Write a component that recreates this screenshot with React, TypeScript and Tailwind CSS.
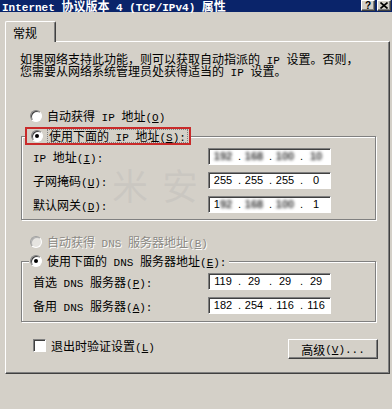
import React from "react";

const MONO = "font-['Liberation_Mono',monospace] text-[11px] leading-[0]";

function T({ s }: { s: string }) {
  const out: React.ReactNode[] = [];
  const re = /&(.)|([\x20-\x25\x27-\x7e]+)|([^\x20-\x7e]+)/g;
  let m: RegExpExecArray | null;
  let i = 0;
  while ((m = re.exec(s))) {
    if (m[1])
      out.push(
        <span key={i++} className={MONO + " underline underline-offset-[1px]"}>
          {m[1]}
        </span>
      );
    else if (m[2])
      out.push(
        <span key={i++} className={MONO + " whitespace-pre"}>
          {m[2]}
        </span>
      );
    else out.push(<span key={i++}>{m[3]}</span>);
  }
  return <>{out}</>;
}

function Radio({ on, disabled }: { on?: boolean; disabled?: boolean }) {
  return (
    <div
      className={`w-[12px] h-[12px] rounded-full shrink-0 flex items-center justify-center border ${
        disabled
          ? "border-t-[#a0a0a0] border-l-[#a0a0a0] border-b-white border-r-white shadow-[inset_1px_1px_0_#b0b0b0] bg-[#e6e4e0]"
          : "border-t-[#808080] border-l-[#808080] border-b-white border-r-white shadow-[inset_1px_1px_0_#404040] bg-white"
      }`}
    >
      {on && <div className="w-[4px] h-[4px] rounded-full bg-black" />}
    </div>
  );
}

function Seg({ children }: { children?: React.ReactNode }) {
  return <div className="w-[26px] flex justify-center whitespace-pre">{children}</div>;
}
function Dot() {
  return <div className="w-[5px] flex justify-end">.</div>;
}

function IPField({ segs }: { segs: React.ReactNode[] }) {
  return (
    <div className="w-[123px] h-[17px] bg-white border border-t-[#808080] border-l-[#808080] border-b-white border-r-white shadow-[inset_1px_1px_0_#404040] flex items-center pl-[1px] font-['Liberation_Sans',sans-serif] text-[11px] leading-[13px] text-black">
      <Seg>{segs[0]}</Seg>
      <Dot />
      <Seg>{segs[1]}</Seg>
      <Dot />
      <Seg>{segs[2]}</Seg>
      <Dot />
      <Seg>{segs[3]}</Seg>
    </div>
  );
}

function Blur({ t }: { t: string }) {
  return <span className="blur-[1.4px] text-[#3a3a3a] font-bold">{t}</span>;
}

function Row({ label, segs }: { label: string; segs: React.ReactNode[] }) {
  return (
    <div className="flex items-center h-[17px]">
      <div className="w-[175px] leading-[14px]">
        <T s={label} />
      </div>
      <IPField segs={segs} />
    </div>
  );
}

function TitleBtn({ children }: { children: React.ReactNode }) {
  return (
    <div className="w-[14px] h-[11px] bg-[#d4d0c8] border border-t-white border-l-white border-b-[#404040] border-r-[#404040] shadow-[inset_-1px_-1px_0_#808080] flex items-center justify-center text-black">
      {children}
    </div>
  );
}

export default function App() {
  return (
    <div className="w-[392px] h-[409px] bg-[#d4d0c8] overflow-hidden relative text-[12px] leading-[14px] text-black font-['Noto_Sans_CJK_SC','Noto_Sans_CJK_JP',sans-serif]">
      {/* title bar */}
      <div className="h-[12px] bg-[#0a246a] flex items-start justify-between">
        <div className="pl-[2px] text-white font-bold leading-[12px] text-[12px] whitespace-nowrap">
          <T s="Internet 协议版本 4 (TCP/IPv4) 属性" />
        </div>
        <div className="flex gap-[2px] pr-[1px]">
          <TitleBtn>
            <span className="font-['Liberation_Sans',sans-serif] font-bold text-[10px] leading-[9px]">?</span>
          </TitleBtn>
          <TitleBtn>
            <svg width="8" height="7" viewBox="0 0 8 7">
              <path d="M0.5 0.5 L7.5 6.5 M7.5 0.5 L0.5 6.5" stroke="#000" strokeWidth="1.6" />
            </svg>
          </TitleBtn>
        </div>
      </div>

      {/* tab */}
      <div className="mt-[9px] ml-[5px] w-[51px] h-[21px] -mb-[1px] relative z-10 bg-[#d4d0c8] border-t border-l border-r border-t-white border-l-white border-r-[#404040] rounded-t-[2px] shadow-[inset_-1px_0_0_#808080] pl-[7px] pt-[4px]">
        常规
      </div>

      {/* panel */}
      <div className="ml-[5px] w-[385px] h-[333px] border border-t-white border-l-white border-r-[#404040] border-b-[#404040] shadow-[inset_-1px_-1px_0_#808080] flex flex-col">
        <div className="ml-[14px] mt-[11px] leading-[12px] whitespace-nowrap">
          <T s="如果网络支持此功能，则可以获取自动指派的 IP 设置。否则，" />
          <br />
          <T s="您需要从网络系统管理员处获得适当的 IP 设置。" />
        </div>

        <div className="mt-[31px] ml-[24px] h-[16px] flex items-center gap-[5px]">
          <Radio />
          <span>
            <T s="自动获得 IP 地址(&O)" />
          </span>
        </div>

        <fieldset className="mt-[3px] ml-[15px] w-[355px] border border-[#808080] shadow-[1px_1px_0_#fff,inset_1px_1px_0_#fff] pt-[3px] pb-[6px]">
          <legend className="ml-[3px] bg-[#d4d0c8]">
            <div className="h-[18px] border-2 border-[#c92a2a] flex items-center pl-[4px] pr-[1px] gap-[4px]">
              <Radio on />
              <span className="border border-dotted border-[#808080] px-[1px] leading-[12px] whitespace-nowrap">
                <T s="使用下面的 IP 地址(&S):" />
              </span>
            </div>
          </legend>
          <div className="flex flex-col gap-[7px] pl-[11px]">
            <Row
              label="IP 地址(&I):"
              segs={[<Blur key="a" t="192" />, <Blur key="b" t="168" />, <Blur key="c" t="100" />, <Blur key="d" t="10" />]}
            />
            <Row label="子网掩码(&U):" segs={["255", "255", "255", "0"]} />
            <Row
              label="默认网关(&D):"
              segs={[
                <span key="a">
                  1<Blur t="92" />
                </span>,
                <Blur key="b" t="168" />,
                <Blur key="c" t="100" />,
                "1",
              ]}
            />
          </div>
        </fieldset>

        <div className="mt-[14px] ml-[24px] h-[16px] flex items-center gap-[5px]">
          <Radio disabled />
          <span className="text-[#8c8a85] [text-shadow:1px_1px_0_#fff]">
            <T s="自动获得 DNS 服务器地址(&B)" />
          </span>
        </div>

        <fieldset className="mt-[3px] ml-[15px] w-[355px] border border-[#808080] shadow-[1px_1px_0_#fff,inset_1px_1px_0_#fff] pt-[4px] pb-[7px]">
          <legend className="ml-[7px] bg-[#d4d0c8] px-[1px]">
            <div className="h-[16px] flex items-center gap-[5px] pr-[2px]">
              <Radio on />
              <span className="whitespace-nowrap">
                <T s="使用下面的 DNS 服务器地址(&E):" />
              </span>
            </div>
          </legend>
          <div className="flex flex-col gap-[7px] pl-[11px]">
            <Row label="首选 DNS 服务器(&P):" segs={["119", "29", "29", "29"]} />
            <Row label="备用 DNS 服务器(&A):" segs={["182", "254", "116", "116"]} />
          </div>
        </fieldset>

        <div className="mt-[17px] ml-[27px] mr-[11px] flex items-start">
          <div className="w-[13px] h-[13px] bg-white border border-t-[#808080] border-l-[#808080] border-b-white border-r-white shadow-[inset_1px_1px_0_#404040]" />
          <span className="ml-[5px] leading-[13px]">
            <T s="退出时验证设置(&L)" />
          </span>
          <div className="ml-auto w-[90px] h-[20px] border border-t-white border-l-white border-b-[#404040] border-r-[#404040] shadow-[inset_-1px_-1px_0_#808080] flex items-center justify-center leading-[14px] pt-[1px]">
            <T s="高级(&V)..." />
          </div>
        </div>
      </div>

      {/* watermark */}
      <div className="absolute left-[112px] top-[160px] pointer-events-none text-[36px] leading-[48px] tracking-[14px] text-[rgba(170,170,170,0.22)] whitespace-nowrap">
        米安
      </div>
    </div>
  );
}
